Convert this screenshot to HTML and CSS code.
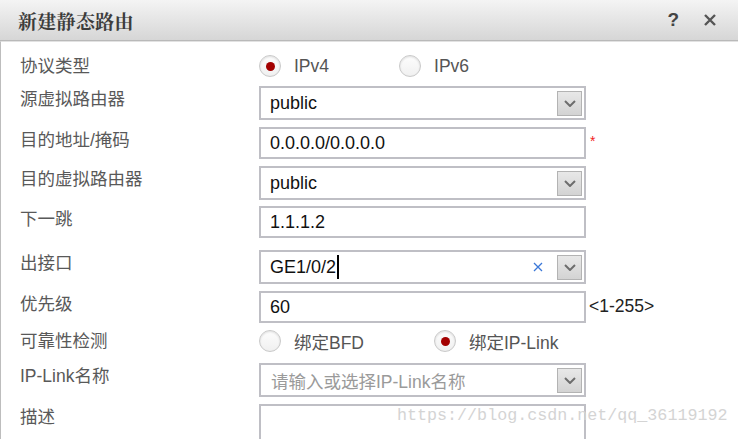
FILE: index.html
```html
<!DOCTYPE html>
<html lang="zh">
<head>
<meta charset="utf-8">
<title>新建静态路由</title>
<link rel="stylesheet" href="styles.css">
</head>
<body>
<div class="dialog">
  <div class="titlebar">
    <span class="title">新建静态路由</span>
    <div class="tools">
      <span class="help">?</span>
      <svg class="close" width="14" height="14" viewBox="0 0 14 14"><path d="M2 2 L12 12 M12 2 L2 12" stroke="#555" stroke-width="2.4" fill="none"/></svg>
    </div>
  </div>
  <div class="form">
    <div class="row row-proto">
      <span class="label mid">协议类型</span>
      <div class="radios">
        <span class="opt"><span class="radio on"></span><span class="opt-text">IPv4</span></span>
        <span class="opt"><span class="radio"></span><span class="opt-text">IPv6</span></span>
      </div>
    </div>
    <div class="row row-sel1">
      <span class="label">源虚拟路由器</span>
      <div class="field select"><span class="val">public</span><span class="dd"><svg width="12" height="7" viewBox="0 0 12 7"><path d="M1 1 L6 6 L11 1" stroke="#6d6d6d" stroke-width="2" fill="none"/></svg></span></div>
    </div>
    <div class="row row-in1">
      <span class="label">目的地址/掩码</span>
      <div class="field input"><span class="val">0.0.0.0/0.0.0.0</span></div>
      <span class="req">*</span>
    </div>
    <div class="row row-sel2">
      <span class="label">目的虚拟路由器</span>
      <div class="field select"><span class="val">public</span><span class="dd"><svg width="12" height="7" viewBox="0 0 12 7"><path d="M1 1 L6 6 L11 1" stroke="#6d6d6d" stroke-width="2" fill="none"/></svg></span></div>
    </div>
    <div class="row row-in2">
      <span class="label">下一跳</span>
      <div class="field input"><span class="val">1.1.1.2</span></div>
    </div>
    <div class="row row-sel3">
      <span class="label">出接口</span>
      <div class="field select"><span class="val">GE1/0/2</span><span class="caret"></span><svg class="clear" width="10" height="10" viewBox="0 0 10 10"><path d="M1 1 L9 9 M9 1 L1 9" stroke="#3b78d8" stroke-width="1.3" fill="none"/></svg><span class="dd"><svg width="12" height="7" viewBox="0 0 12 7"><path d="M1 1 L6 6 L11 1" stroke="#6d6d6d" stroke-width="2" fill="none"/></svg></span></div>
    </div>
    <div class="row row-in3">
      <span class="label">优先级</span>
      <div class="field input"><span class="val">60</span></div>
      <span class="hint">&lt;1-255&gt;</span>
    </div>
    <div class="row row-check">
      <span class="label mid">可靠性检测</span>
      <div class="radios">
        <span class="opt"><span class="radio"></span><span class="opt-text">绑定BFD</span></span>
        <span class="opt"><span class="radio on"></span><span class="opt-text">绑定IP-Link</span></span>
      </div>
    </div>
    <div class="row row-sel4">
      <span class="label">IP-Link名称</span>
      <div class="field select"><span class="val placeholder">请输入或选择IP-Link名称</span><span class="dd"><svg width="12" height="7" viewBox="0 0 12 7"><path d="M1 1 L6 6 L11 1" stroke="#6d6d6d" stroke-width="2" fill="none"/></svg></span></div>
    </div>
    <div class="row row-desc">
      <span class="label">描述</span>
      <div class="field textarea"></div>
    </div>
  </div>
  <div class="watermark">https://blog.csdn.net/qq_36119192</div>
</div>
</body>
</html>
```

FILE: styles.css
```css
html, body {
  margin: 0;
  padding: 0;
  background: #fff;
}
body {
  font-family: "Liberation Sans", "Noto Sans CJK SC", sans-serif;
}
.dialog {
  position: relative;
  width: 738px;
  height: 439px;
  overflow: hidden;
  background: #fff;
}
.titlebar {
  height: 41px;
  box-sizing: border-box;
  background: linear-gradient(#f4f4f4, #d6d6d6);
  border-bottom: 1px solid #b9b9b9;
  display: flex;
  align-items: center;
  justify-content: space-between;
  padding: 0 21px 0 18px;
}
.title {
  font-family: "Noto Serif CJK SC", "Noto Sans CJK SC", serif;
  font-size: 19px;
  font-weight: 700;
  color: #3c3c3c;
  letter-spacing: 0.3px;
}
.tools {
  display: flex;
  align-items: center;
  gap: 24px;
}
.help {
  font-family: "Liberation Sans", sans-serif;
  font-weight: 700;
  font-size: 19px;
  color: #444;
}
.form {
  border-left: 1px solid #bdbdbd;
  border-top: 1px solid #e2e2e2;
  padding-left: 19px;
  padding-top: 4px;
  height: 400px;
}
.row {
  display: grid;
  grid-template-columns: 239px 327px auto;
  align-items: start;
}
.label {
  font-family: "Liberation Sans", "Noto Sans CJK SC", sans-serif;
  font-size: 17.5px;
  line-height: 22px;
  color: #595959;
  padding-top: 2px;
  white-space: nowrap;
}
.label.mid {
  align-self: center;
  padding-top: 0;
}
.row-proto { height: 40px; margin-bottom: 0; align-items: center; }
.row-sel1 { margin-bottom: 7px; }
.row-in1 { margin-bottom: 7px; }
.row-sel2 { margin-bottom: 6px; }
.row-in2 { margin-bottom: 12px; }
.row-sel3 { margin-bottom: 7px; }
.row-in3 { margin-bottom: 0; }
.row-check { height: 36px; margin-bottom: 4px; align-items: center; }
.row-sel4 { margin-bottom: 7px; }

.radios {
  display: flex;
  align-items: center;
  gap: 70px;
  grid-column: 2 / 4;
}
.opt {
  display: flex;
  align-items: center;
  gap: 13px;
}
.radio {
  width: 22px;
  height: 22px;
  box-sizing: border-box;
  border-radius: 50%;
  border: 1px solid #c9c9c9;
  background: linear-gradient(#fdfdfd, #f0f0f0);
  box-shadow: inset 0 1px 2px rgba(0,0,0,0.12);
  display: flex;
  align-items: center;
  justify-content: center;
}
.radio.on::after {
  content: "";
  width: 9px;
  height: 9px;
  border-radius: 50%;
  background: #a30000;
}
.opt-text {
  font-family: "Liberation Sans", "Noto Sans CJK SC", sans-serif;
  font-size: 17.5px;
  color: #555;
}
.field {
  box-sizing: border-box;
  border: 2px solid #bfbfc5;
  display: flex;
  align-items: center;
  padding-left: 9px;
  font-size: 18px;
  color: #111;
  background: #fff;
}
.select { height: 34px; }
.input { height: 32px; }
.textarea { height: 60px; }
.val { white-space: nowrap; }
.placeholder {
  font-family: "Liberation Sans", "Noto Sans CJK SC", sans-serif;
  font-size: 17.5px;
  color: #9a9a9a;
  padding-left: 1px;
}
.caret {
  width: 2px;
  height: 24px;
  background: #000;
  margin-left: 1px;
}
.clear {
  margin-left: auto;
  margin-right: 14px;
}
.dd {
  margin-left: auto;
  margin-right: 2px;
  width: 25px;
  height: 25px;
  box-sizing: border-box;
  border: 1px solid #b3b3b3;
  background: linear-gradient(#e8e8e8, #d3d3d3);
  display: flex;
  align-items: center;
  justify-content: center;
}
.clear + .dd { margin-left: 0; }
.req {
  color: #f21d1d;
  font-size: 14px;
  padding-left: 4px;
  padding-top: 6px;
}
.hint {
  font-size: 17.5px;
  color: #222;
  padding-left: 3px;
  padding-top: 5px;
}
.watermark {
  position: absolute;
  left: 397px;
  top: 406px;
  font-family: "Liberation Mono", monospace;
  font-size: 16.7px;
  color: #d4d4d4;
  white-space: nowrap;
}
```
